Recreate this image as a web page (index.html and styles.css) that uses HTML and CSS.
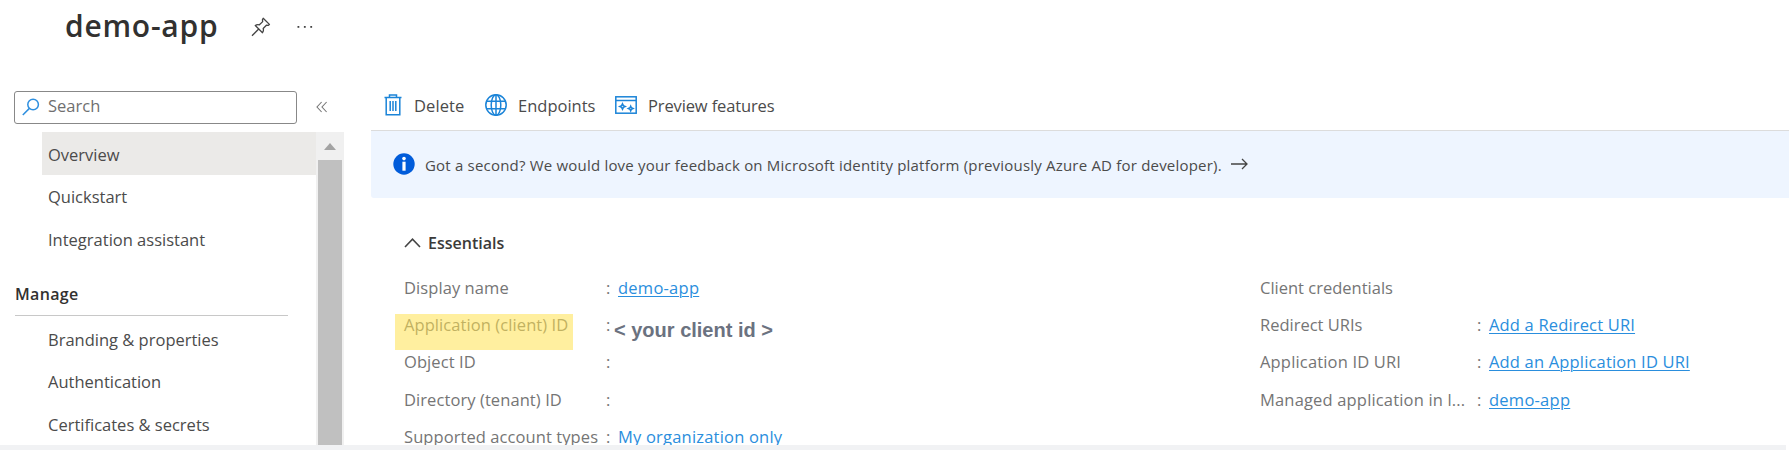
FILE: index.html
```html
<!DOCTYPE html>
<html lang="en">
<head>
<meta charset="utf-8">
<title>demo-app</title>
<link rel="stylesheet" href="styles.css">
</head>
<body>
<div class="page">
  <header class="header">
    <h1 class="title">demo-app</h1>
    <svg class="pin" width="20" height="20" viewBox="0 0 20 20" fill="none" stroke="#444" stroke-width="1.300" stroke-linejoin="round"><path d="M12.200 1.200 18.400 7.400l-1.300 1-1.700-.2-3.200 3.300c.5 1.700.3 3-.7 4.200L4.300 8.500c1.200-1 2.500-1.200 4.100-.7l3.300-3.200-.3-1.900zM7.700 12 1 18.800"/></svg>
    <svg class="more" width="16" height="4" viewBox="0 0 16 4" fill="#444"><rect x="0.500" y="1" width="1.800" height="1.800"/><rect x="6.900" y="1" width="1.800" height="1.800"/><rect x="13.300" y="1" width="1.800" height="1.800"/></svg>
  </header>
  <div class="body">
    <aside class="side">
      <div class="search-row">
        <div class="search">
          <svg width="18" height="18" viewBox="0 0 18 18" fill="none" stroke="#2f8fdf" stroke-width="1.500"><circle cx="11.100" cy="6.500" r="5.300"/><path d="M7.400 10.400.8 17"/></svg>
          <span>Search</span>
        </div>
        <svg class="collapse" width="12" height="12" viewBox="0 0 12 12" fill="none" stroke="#777" stroke-width="1.100"><path d="M5.600 1 1 6l4.600 5M10.600 1 6 6l4.600 5"/></svg>
      </div>
      <div class="menu">
        <nav class="nav">
          <a class="item active">Overview</a>
          <a class="item">Quickstart</a>
          <a class="item">Integration assistant</a>
          <div class="group">Manage</div>
          <a class="item">Branding &amp; properties</a>
          <a class="item">Authentication</a>
          <a class="item">Certificates &amp; secrets</a>
        </nav>
        <div class="scrollbar"><i class="arrow-up"></i><i class="thumb"></i></div>
      </div>
    </aside>
    <main class="main">
      <div class="toolbar">
        <div class="tool delete">
          <svg width="18" height="22" viewBox="0 0 18 22" fill="none" stroke="#1b84d8" stroke-width="1.500"><path d="M.5 3.500h17M5.500 3.300V1h7v2.300M2.200 3.500v17.300h13.600V3.500M6.200 7v10M9 7v10M11.800 7v10"/></svg>
          <span>Delete</span>
        </div>
        <div class="tool endpoints">
          <svg width="22" height="22" viewBox="0 0 22 22" fill="none" stroke="#1b84d8" stroke-width="1.500"><circle cx="11" cy="11" r="10.200"/><ellipse cx="11" cy="11" rx="4.800" ry="10.200"/><path d="M2 7.300h18M2 14.700h18M11 .8v20.400"/></svg>
          <span>Endpoints</span>
        </div>
        <div class="tool preview">
          <svg width="22" height="18" viewBox="0 0 22 18" fill="none" stroke="#1b84d8" stroke-width="1.500"><rect x=".8" y=".8" width="20.400" height="16.400"/><path d="M1 4.500h20"/><path d="m7.500 7.700.9 1.900 1.900.9-1.900.9-.9 1.900-.9-1.900-1.900-.9 1.900-.9zM15.700 10.200l.7 1.600 1.600.7-1.600.7-.7 1.600-.7-1.600-1.600-.7 1.600-.7z"/></svg>
          <span>Preview features</span>
        </div>
      </div>
      <div class="banner">
        <svg width="22" height="22" viewBox="0 0 22 22"><circle cx="11" cy="11" r="10.700" fill="#015cda"/><path d="M9.400 8.700h3.200v9H9.400z" fill="#fff"/><circle cx="11" cy="5.600" r="1.800" fill="#fff"/></svg>
        <span class="message">Got a second? We would love your feedback on Microsoft identity platform (previously Azure AD for developer).</span>
        <svg class="go" width="17" height="12" viewBox="0 0 17 12" fill="none" stroke="#444" stroke-width="1.300"><path d="M0 6h16M11 1l5 5-5 5"/></svg>
      </div>
      <section class="essentials">
        <h2 class="heading"><svg width="17" height="10" viewBox="0 0 17 10" fill="none" stroke="#444" stroke-width="1.600"><path d="M1 9l7.500-7.800L16 9"/></svg><span>Essentials</span></h2>
        <div class="columns">
          <dl class="props left">
            <dt>Display name</dt><dd><a class="link">demo-app</a></dd>
            <dt>Application (client) ID<mark class="mark"></mark></dt><dd><b class="client">&lt; your client id &gt;</b></dd>
            <dt>Object ID</dt><dd></dd>
            <dt>Directory (tenant) ID</dt><dd></dd>
            <dt>Supported account types</dt><dd><a class="link plain">My organization only</a></dd>
          </dl>
          <dl class="props right">
            <dt class="tight">Client credentials</dt><dd class="bare"></dd>
            <dt class="tight">Redirect URIs</dt><dd><a class="link">Add a Redirect URI</a></dd>
            <dt>Application ID URI</dt><dd><a class="link">Add an Application ID URI</a></dd>
            <dt>Managed application in l...</dt><dd><a class="link app">demo-app</a></dd>
          </dl>
        </div>
      </section>
    </main>
  </div>
</div>
</body>
</html>
```

FILE: styles.css
```css
* { box-sizing: border-box; }
body { margin: 0; height: 450px; overflow: hidden; background: linear-gradient(#f1f2f4, #f1f2f4) left top / 1786px 100% no-repeat #fff; color: #4b4b4b; font: 16.5px/22px "Open Sans", "Noto Sans", sans-serif; }
.page { height: 445px; overflow: hidden; background: #fff; }
.header { display: flex; align-items: flex-start; height: 91px; padding-left: 65px; }
.title { margin: 6px 0 0; font-size: 30px; line-height: 40px; font-weight: 600; letter-spacing: .75px; color: #323130; white-space: nowrap; width: 186px; }
.pin { margin-top: 17px; }
.more { margin: 25px 0 0 26px; }
.body { display: flex; }
.side { width: 371px; flex: none; }
.search-row { display: flex; align-items: center; padding-left: 14px; }
.search { display: flex; align-items: center; gap: 8px; width: 283px; height: 32.500px; padding: 0 7px; border: 1.500px solid #888; border-radius: 3px; color: #6f6f6f; }
.search span { padding-bottom: 3px; }
.collapse { margin-left: 19px; }
.menu { display: flex; margin-top: 8.500px; height: 313px; }
.nav { width: 316px; padding-left: 42px; }
.item { display: block; height: 42.700px; padding: 11.700px 0 0 6px; letter-spacing: 0; }
.active { background: #ebeae8; }
.group { margin: 12px 28px 1px -27px; height: 44px; padding-top: 11px; border-bottom: 1px solid #c8c8c8; font-weight: 600; font-size: 16px; letter-spacing: .35px; color: #323130; }
.scrollbar { display: flex; flex-direction: column; width: 28px; padding: 11px 2px 0; background: #f0f0f0; }
.arrow-up { align-self: center; border: solid transparent; border-width: 0 6.500px 7px; border-bottom-color: #a3a3a3; margin-bottom: 10px; }
.thumb { flex: 1; background: #c0c0c0; }
.main { flex: 1; min-width: 0; }
.toolbar { display: flex; height: 39px; padding-left: 13px; align-items: flex-start; }
.tool { display: flex; align-items: center; gap: 11px; height: 28px; white-space: nowrap; }
.tool span { padding-top: 2px; }
.delete { width: 101px; gap: 12px; letter-spacing: .1px; }
.endpoints { width: 130px; }
.preview { letter-spacing: -.13px; }
.banner { display: flex; align-items: center; height: 67.500px; padding-left: 22px; border-top: 1.500px solid #dcdcdc; background: #eef5ff; border-radius: 0 0 0 3px; }
.message { margin-left: 10px; width: 806px; padding-top: 1px; font-size: 15px; letter-spacing: .2px; white-space: nowrap; }
.essentials { padding: 34px 0 0 33px; }
.heading { display: flex; align-items: center; gap: 7px; margin: 0; height: 22px; font-size: 16px; font-weight: 600; color: #3b3a39; }
.columns { display: flex; margin-top: 15.500px; }
.props { display: grid; grid-auto-rows: 37.400px; align-items: center; margin: 0; color: #757575; white-space: nowrap; }
.left { grid-template-columns: 202px 654px; letter-spacing: .08px; }
.right { grid-template-columns: 217px 300px; align-content: start; letter-spacing: .17px; }
.props dt { position: relative; }
.props dd { position: relative; display: flex; margin: 0; }
.props dd::before { content: ":"; width: 12px; letter-spacing: 0; }
.props .bare::before { content: none; }
.tight { letter-spacing: 0; }
.link { color: #2a8edd; text-decoration: underline; text-decoration-thickness: 1.300px; text-underline-offset: 2px; }
.left .link, .app { letter-spacing: .25px; }
.left .plain { text-decoration: none; letter-spacing: .2px; }
.mark { position: absolute; left: -9px; top: 0; width: 178px; height: 36px; background: rgba(255, 226, 80, .55); }
.client { position: absolute; left: 8px; top: 5px; font: bold 20px/22px "Liberation Sans", Arial, sans-serif; letter-spacing: 0; color: #6b7280; }
```
